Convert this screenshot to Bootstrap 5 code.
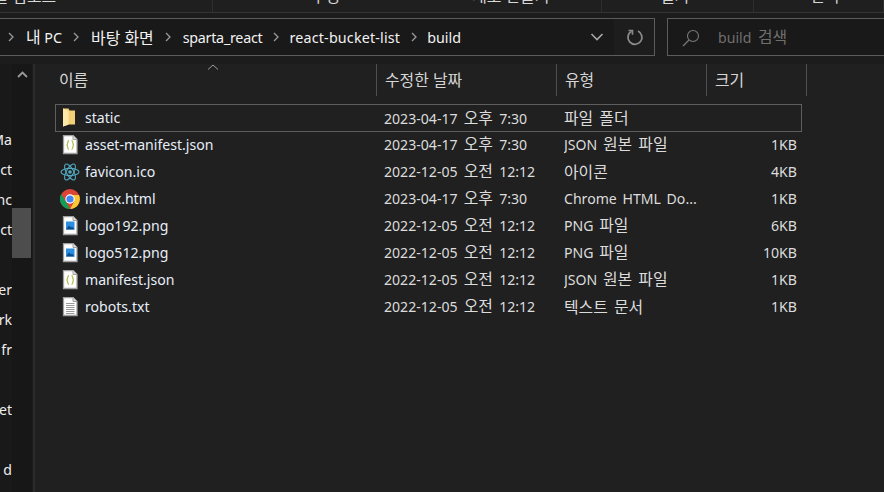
<!DOCTYPE html>
<html lang="ko"><head><meta charset="utf-8">
<title>build</title>
<link href="https://cdn.jsdelivr.net/npm/bootstrap@5.3.0/dist/css/bootstrap.min.css" rel="stylesheet">
<style>
html,body{height:492px;overflow:hidden}
body{background:#202020;color:#e8e8e8;font:14.1px/20px "Noto Sans","Noto Sans CJK KR",sans-serif;width:884px}
.ko{font-size:15.9px}
.ribbon{height:13px;background:#1f1f1f;border-bottom:1px solid #343434;overflow:hidden;color:#d8d8d8}
.rib-cell{height:12px;border-right:1px solid #2e2e2e;line-height:20px;white-space:nowrap}
.rib-text{margin-top:-14px}
.c1{width:213px}.c2{width:389px}.c3{width:152px}.c4{flex:1}
.rib-a{margin-left:-21px}
.rib-b{margin-left:98px}
.rib-c{margin-left:132px}
.rib-d{margin-left:58px}
.rib-e{margin-left:56px}
.band{height:51px;padding:5px 0 8px;background:#1c1c1c}
.addr{width:655px;height:38px;border:1px solid #5c5c5c;border-left:0;background:#191919;color:#f2f2f2;white-space:nowrap}
.crumbs{width:570px;padding-top:1px;font-size:14.3px}
.crumb-sep{width:8px;height:10px;margin:0 11px 2px 10px;flex:none}
.crumb-sep.lead{margin-left:7px}
.crumb-sep.snug{margin-right:9px}
.tight{letter-spacing:-.25px}
.loose{letter-spacing:.18px}
.dd{width:16px;flex:none;margin-left:19px;margin-right:9px}
.tool{width:40px;height:36px;background:#1d1d1d;padding-left:2px}
.find{margin-left:12px;flex:1;height:38px;border:1px solid #5c5c5c;border-right:0;background:#191919;color:#6f6f6f;padding-top:1px;word-spacing:3px}
.find-ico{margin:0 18px 0 14px}
.body-wrap{height:428px}
.side{width:33px;background:#191919;height:428px;border-right:1px solid #1c1c1c;flex:none}
.side-text{width:12px;overflow:hidden;padding-top:60px;color:#eee}
.side-row{height:30px;line-height:31px;white-space:nowrap;direction:rtl;width:12px}
.track{width:20px;padding-top:7px;background:#171717}
.thumb{width:19px;height:50px;background:#4d4d4d;margin:130px 0 0 0}
.gutter{width:2px;background:#2b2b2b;flex:none}
.files{flex:1;background:#202020}
.heads{height:32px;color:#d6d6d6;position:relative}
.hcell{height:32px;border-right:1px solid #4f4f4f;padding-left:8px;line-height:33px}
.h1c{width:342px;padding-left:24px}.h2c{width:180px}.h3c{width:150px}.h4c{width:100px}
.sort{position:absolute;left:172px;top:0;width:12px;height:6px}
.rows{padding:8px 0 0 20px}
.frow{width:747px;height:27px;line-height:26px;border:1px solid transparent;white-space:nowrap}
.frow.sel{border-color:#5e5e5e;height:28px;margin-bottom:-1px}
.ficon{width:29px;flex:none;padding-left:4px}
.ficon svg{display:block}
.fname{width:299px;color:#e6eef8}
.fdate{width:180px;color:#dcdcdc;word-spacing:2.500px}
.ftype{width:138px;color:#dcdcdc;overflow:hidden;word-spacing:2px}
.fsize{width:99px;color:#dcdcdc;text-align:right;padding-right:4px}
</style></head><body>
<svg width="0" height="0" class="d-block" style="height:0">
<defs>
<symbol id="doc" viewBox="0 0 20 20"><path d="M3.500 .5H13L17 4.500V18.500H3.500Z" fill="#fff" stroke="#a0a0a0" stroke-width="1.300"/><path d="M13 .5V4.500H17" fill="#ddd" stroke="#a0a0a0"/></symbol>
<symbol id="json" viewBox="0 0 20 20"><use href="#doc"/><path d="M9 5.500C7.300 5.500 8 9 7 10 8 11 7.300 14.500 9 14.500M11.500 5.500C13.200 5.500 12.500 9 13.500 10 12.500 11 13.200 14.500 11.500 14.500" fill="none" stroke="#b5bf55" stroke-width="1.300"/></symbol>
<symbol id="png" viewBox="0 0 20 20"><use href="#doc"/><rect x="6" y="5.500" width="8.500" height="8" fill="#2a8fe0"/><path d="M6 13.500L9 9.500 11 11.500 12 10.500 14.500 13.500Z" fill="#0b4c8c"/></symbol>
</defs></svg>
<div class="ribbon d-flex">
<div class="rib-cell c1"><div class="rib-text rib-a"><span class="ko">파일 업로드</span></div></div>
<div class="rib-cell c2 d-flex"><div class="rib-text rib-b"><span class="ko">구성</span></div><div class="rib-text rib-c"><span class="ko">새로 만들기</span></div></div>
<div class="rib-cell c3"><div class="rib-text rib-d"><span class="ko">열기</span></div></div>
<div class="rib-cell c4"><div class="rib-text rib-e"><span class="ko">선택</span></div></div>
</div>
<div class="band d-flex">
<div class="addr d-flex align-items-center">
<div class="crumbs d-flex align-items-center">
<svg class="crumb-sep lead" viewBox="0 0 8 10"><path d="M2 1L6 5 2 9" fill="none" stroke="#9a9a9a" stroke-width="1.300"/></svg><span><span class="ko">내</span> PC</span>
<svg class="crumb-sep" viewBox="0 0 8 10"><path d="M2 1L6 5 2 9" fill="none" stroke="#9a9a9a" stroke-width="1.300"/></svg><span class="ko">바탕 화면</span>
<svg class="crumb-sep" viewBox="0 0 8 10"><path d="M2 1L6 5 2 9" fill="none" stroke="#9a9a9a" stroke-width="1.300"/></svg><span class="tight">sparta_react</span>
<svg class="crumb-sep snug" viewBox="0 0 8 10"><path d="M2 1L6 5 2 9" fill="none" stroke="#9a9a9a" stroke-width="1.300"/></svg><span class="loose">react-bucket-list</span>
<svg class="crumb-sep snug" viewBox="0 0 8 10"><path d="M2 1L6 5 2 9" fill="none" stroke="#9a9a9a" stroke-width="1.300"/></svg><span>build</span>
</div>
<svg class="dd" viewBox="0 0 16 10" height="10"><path d="M2.500 2L8 7.500 13.500 2" fill="none" stroke="#a8a8a8" stroke-width="1.600"/></svg>
<div class="tool d-flex align-items-center justify-content-center">
<svg width="18" height="18" viewBox="0 0 18 18"><path d="M5.500 3.200A7 7 0 1 0 12 3" fill="none" stroke="#8a8a8a" stroke-width="1.800"/><path d="M2.500 2.500H6.500V6.800" fill="none" stroke="#8a8a8a" stroke-width="1.600"/></svg>
</div>
</div>
<div class="find d-flex align-items-center">
<svg class="find-ico" width="18" height="18" viewBox="0 0 18 18"><circle cx="11" cy="7" r="5.500" fill="none" stroke="#7a7a7a" stroke-width="1.100"/><path d="M7 11L1 17" stroke="#7a7a7a" stroke-width="1.200"/></svg>
<span>build <span class="ko">검색</span></span>
</div>
</div>
<div class="body-wrap d-flex">
<div class="side d-flex">
<div class="side-text">
<div class="side-row">Ma</div><div class="side-row">ct</div><div class="side-row">nc</div><div class="side-row">ct</div><div class="side-row">&nbsp;</div><div class="side-row">er</div><div class="side-row">rk,</div><div class="side-row">fr</div><div class="side-row">&nbsp;</div><div class="side-row">et</div><div class="side-row">&nbsp;</div><div class="side-row">d</div>
</div>
<div class="track">
<svg class="d-block mx-auto" width="11" height="7" viewBox="0 0 11 7"><path d="M1 6L5.500 1.500 10 6" fill="none" stroke="#9a9a9a" stroke-width="1.800"/></svg>
<div class="thumb"></div>
</div>
</div>
<div class="gutter"></div>
<div class="files">
<div class="heads d-flex">
<svg class="sort" viewBox="0 0 12 6"><path d="M1 5.500L6 1 11 5.500" fill="none" stroke="#9a9a9a"/></svg>
<div class="hcell h1c ko">이름</div><div class="hcell h2c ko">수정한 날짜</div><div class="hcell h3c ko">유형</div><div class="hcell h4c ko">크기</div>
</div>
<div class="rows">
<div class="frow sel d-flex align-items-center"><div class="ficon"><svg width="20" height="20" viewBox="0 0 20 20"><path d="M3 .5H8.500L9.500 2.500H15V16.500H9L3 18.500Z" fill="#f3cf77"/><path d="M3 .5L8.500 3V16.500L3 18.500Z" fill="#ffe9a8"/></svg></div><div class="fname">static</div><div class="fdate">2023-04-17 <span class="ko">오후</span> 7:30</div><div class="ftype ko">파일 폴더</div><div class="fsize"></div></div>
<div class="frow d-flex align-items-center"><div class="ficon"><svg width="20" height="20"><use href="#json"/></svg></div><div class="fname">asset-manifest.json</div><div class="fdate">2023-04-17 <span class="ko">오후</span> 7:30</div><div class="ftype">JSON <span class="ko">원본 파일</span></div><div class="fsize">1KB</div></div>
<div class="frow d-flex align-items-center"><div class="ficon"><svg width="20" height="20" viewBox="0 0 20 20"><g fill="none" stroke="#53a7bd" stroke-width="1.100"><ellipse cx="10" cy="10" rx="9" ry="3.600"/><ellipse cx="10" cy="10" rx="9" ry="3.600" transform="rotate(60 10 10)"/><ellipse cx="10" cy="10" rx="9" ry="3.600" transform="rotate(120 10 10)"/></g><circle cx="10" cy="10" r="1.800" fill="#53a7bd"/></svg></div><div class="fname">favicon.ico</div><div class="fdate">2022-12-05 <span class="ko">오전</span> 12:12</div><div class="ftype ko">아이콘</div><div class="fsize">4KB</div></div>
<div class="frow d-flex align-items-center"><div class="ficon"><svg width="20" height="20" viewBox="0 0 20 20"><circle cx="10" cy="10" r="10" fill="#db4437"/><path d="M1.300 5L6 13 10 20A10 10 0 0 1 1.300 5Z" fill="#0f9d58"/><path d="M10 6H19A10 10 0 0 1 10 20L14 13Z" fill="#fcc934"/><circle cx="10" cy="10" r="4.700" fill="#fff"/><circle cx="10" cy="10" r="3.600" fill="#4285f4"/></svg></div><div class="fname">index.html</div><div class="fdate">2023-04-17 <span class="ko">오후</span> 7:30</div><div class="ftype">Chrome HTML Do...</div><div class="fsize">1KB</div></div>
<div class="frow d-flex align-items-center"><div class="ficon"><svg width="20" height="20"><use href="#png"/></svg></div><div class="fname">logo192.png</div><div class="fdate">2022-12-05 <span class="ko">오전</span> 12:12</div><div class="ftype">PNG <span class="ko">파일</span></div><div class="fsize">6KB</div></div>
<div class="frow d-flex align-items-center"><div class="ficon"><svg width="20" height="20"><use href="#png"/></svg></div><div class="fname">logo512.png</div><div class="fdate">2022-12-05 <span class="ko">오전</span> 12:12</div><div class="ftype">PNG <span class="ko">파일</span></div><div class="fsize">10KB</div></div>
<div class="frow d-flex align-items-center"><div class="ficon"><svg width="20" height="20"><use href="#json"/></svg></div><div class="fname">manifest.json</div><div class="fdate">2022-12-05 <span class="ko">오전</span> 12:12</div><div class="ftype">JSON <span class="ko">원본 파일</span></div><div class="fsize">1KB</div></div>
<div class="frow d-flex align-items-center"><div class="ficon"><svg width="20" height="20" viewBox="0 0 20 20"><use href="#doc"/><path d="M6 6.500H14.500M6 8.500H14.500M6 10.500H14.500M6 12.500H14.500M6 14.500H14.500M6 16.500H14.500" stroke="#9a9a9a"/></svg></div><div class="fname">robots.txt</div><div class="fdate">2022-12-05 <span class="ko">오전</span> 12:12</div><div class="ftype ko">텍스트 문서</div><div class="fsize">1KB</div></div>
</div>
</div>
</div>
</body></html>
